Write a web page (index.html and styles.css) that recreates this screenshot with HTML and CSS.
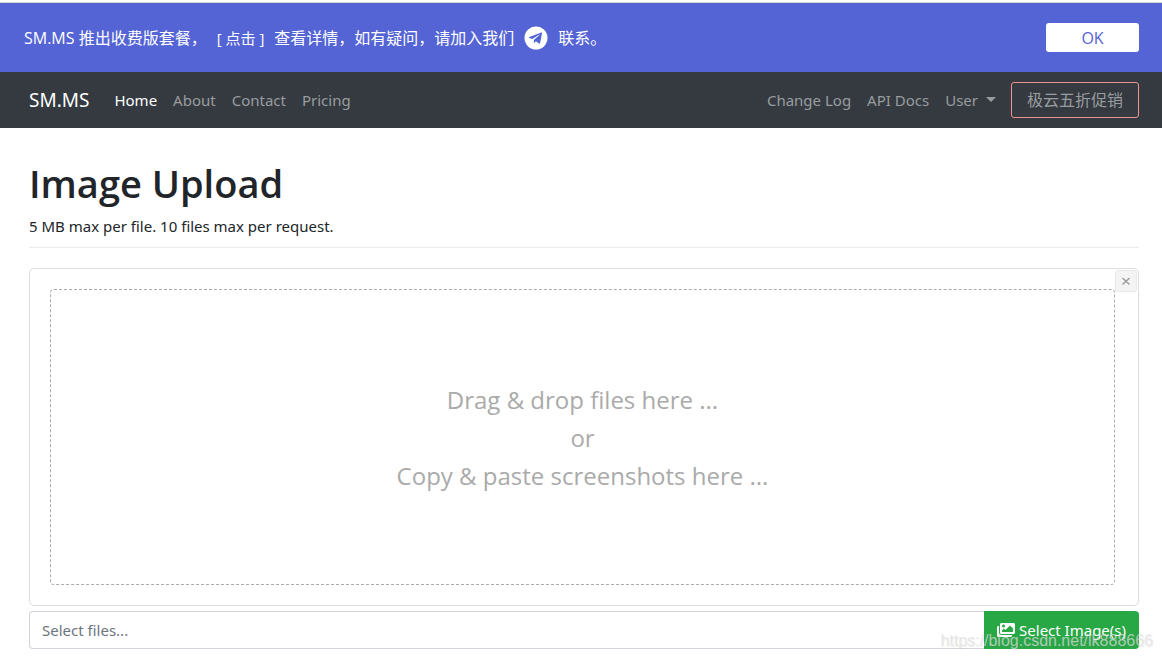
FILE: index.html
```html
<!DOCTYPE html>
<html lang="en">
<head>
<meta charset="utf-8">
<meta name="viewport" content="width=device-width, initial-scale=1">
<title>Image Upload - SM.MS</title>
<link rel="stylesheet" href="styles.css">
</head>
<body>
<aside class="notice" lang="zh-CN">
  <p class="notice-text">
    <span>SM.MS 推出收费版套餐，</span>
    <a class="notice-link" href="#pricing">[ 点击 ]</a>
    <span>查看详情，如有疑问，请加入我们</span>
    <a class="telegram" href="#telegram" aria-label="Telegram">
      <svg viewBox="0 0 24 24" width="24" height="24" aria-hidden="true">
        <circle cx="12" cy="12" r="11.5" fill="#fff"/>
        <path d="M18.100 6.800 16.100 17c-.15.7-.55.85-1.100.55l-3.100-2.300-1.500 1.450c-.17.17-.3.3-.63.3l.23-3.200 5.700-5.150c.25-.22-.05-.35-.38-.13l-7.050 4.450-3-.95c-.66-.2-.68-.66.14-.98l11.800-4.550c.55-.2 1.050.13.890.31Z" fill="#5464d5"/>
      </svg>
    </a>
    <span>联系。</span>
  </p>
  <button class="notice-ok" type="button">OK</button>
</aside>
<nav class="navbar">
  <a class="brand" href="#">SM.MS</a>
  <div class="nav-group">
    <a class="nav-link active" href="#">Home</a>
    <a class="nav-link" href="#about">About</a>
    <a class="nav-link" href="#contact">Contact</a>
    <a class="nav-link" href="#pricing">Pricing</a>
  </div>
  <div class="nav-group nav-end">
    <a class="nav-link" href="#log">Change Log</a>
    <a class="nav-link" href="#docs">API Docs</a>
    <button class="nav-link dropdown" type="button">User</button>
    <a class="promo" href="#promo" lang="zh-CN">极云五折促销</a>
  </div>
</nav>
<main class="page">
  <h1 class="title">Image Upload</h1>
  <p class="subtitle">5 MB max per file. 10 files max per request.</p>
  <hr class="rule">
  <section class="preview">
    <button class="close" type="button" aria-label="Close">
      <svg viewBox="0 0 10 10" width="10" height="10" aria-hidden="true"><path d="M1.500 2l7 6.500M8.500 2l-7 6.500" stroke="#999" stroke-width="1.300"/></svg>
    </button>
    <div class="dropzone">Drag &amp; drop files here ...<br>or<br>Copy &amp; paste screenshots here ...</div>
  </section>
  <div class="upload">
    <input class="caption" type="text" aria-label="Selected files" placeholder="Select files..." readonly>
    <button class="browse" type="button">
      <svg viewBox="0 0 576 512" width="18" height="16" aria-hidden="true"><path fill="#fff" d="M480 416v16c0 26.500-21.500 48-48 48H48c-26.500 0-48-21.500-48-48V176c0-26.500 21.500-48 48-48h16v208c0 44.100 35.900 80 80 80h336zm96-80V80c0-26.500-21.500-48-48-48H144c-26.500 0-48 21.500-48 48v256c0 26.500 21.500 48 48 48h384c26.500 0 48-21.500 48-48zM256 128c0 26.500-21.500 48-48 48s-48-21.500-48-48 21.500-48 48-48 48 21.500 48 48zm-96 144 55.500-55.500c4.700-4.700 12.300-4.700 17 0L272 256l135.500-135.500c4.700-4.700 12.300-4.700 17 0L512 208v112H160v-48z"/></svg>
      <span>Select Image(s)</span>
    </button>
    <span class="watermark">https://blog.csdn.net/lk888666</span>
  </div>
</main>
</body>
</html>
```
FILE: styles.css
```css
* {
  box-sizing: border-box;
}

body {
  margin: 0;
  padding-top: 2px;
  background: #fff;
  color: #212529;
  font-family: "Noto Sans", "Noto Sans CJK SC", sans-serif;
  font-size: 15px;
  line-height: 24px;
}

a {
  color: inherit;
  text-decoration: none;
}

button,
input {
  font: inherit;
}

.notice {
  display: flex;
  align-items: center;
  justify-content: space-between;
  min-height: 70px;
  padding: 0 23px 0 24px;
  border-top: 1px solid #d6d6d6;
  background: #5464d5;
  color: #fff;
}

.notice-text {
  display: flex;
  align-items: center;
  gap: 10px;
  margin: 0;
  font-family: "Open Sans", "Noto Sans CJK SC", sans-serif;
  font-size: 16px;
}

.notice-link {
  font-size: 15px;
}

.telegram {
  display: flex;
}

.notice-ok {
  width: 93px;
  height: 29px;
  padding: 0;
  border: 0;
  border-radius: 3px;
  background: #fff;
  color: #5464d5;
  font-family: "Open Sans", sans-serif;
  font-size: 16px;
}

.navbar {
  display: flex;
  align-items: center;
  min-height: 56px;
  padding: 0 23px 0 29px;
  background: #343a40;
}

.brand {
  margin-right: 17px;
  color: #fff;
  font-size: 19px;
}

.nav-group {
  display: flex;
  align-items: center;
}

.nav-end {
  margin-left: auto;
}

.nav-link {
  padding: 8px;
  border: 0;
  background: none;
  color: #999c9f;
}

.nav-link.active {
  color: #fff;
}

.dropdown::after {
  content: "";
  display: inline-block;
  margin-left: 8px;
  border: 5px solid transparent;
  border-top-color: currentColor;
  border-bottom: 0;
  vertical-align: 4px;
}

.promo {
  margin-left: 7px;
  padding: 5px 15px;
  border: 1px solid #f29393;
  border-radius: 3px;
  color: #999c9f;
  font-size: 16px;
}

.page {
  padding: 31px 23px 10px 29px;
}

.title {
  margin: 0 0 7px;
  font-family: "Open Sans", sans-serif;
  font-size: 38px;
  font-weight: 600;
  line-height: 48px;
}

.subtitle {
  margin: 0;
}

.rule {
  margin: 9px 0 20px;
  border: 0;
  border-top: 1px solid #ebebeb;
}

.preview {
  position: relative;
  padding: 20px 23px 20px 20px;
  border: 1px solid #ddd;
  border-radius: 5px;
}

.close {
  position: absolute;
  top: 1px;
  right: 1px;
  display: flex;
  align-items: center;
  justify-content: center;
  width: 22px;
  height: 22px;
  padding: 0;
  border: 1px solid #e8e8e8;
  border-radius: 3px;
  background: #f4f4f4;
}

.dropzone {
  padding: 91px 20px 89px;
  border: 1px dashed #aaa;
  border-radius: 4px;
  color: #aaa;
  font-family: "Open Sans", sans-serif;
  font-size: 24px;
  line-height: 38px;
  text-align: center;
}

.upload {
  position: relative;
  display: flex;
  margin-top: 5px;
}

.caption {
  flex: 1;
  min-width: 0;
  height: 38px;
  padding: 0 12px;
  border: 1px solid #ced4da;
  border-right: 0;
  border-radius: 4px 0 0 4px;
  color: #495057;
}

.caption::placeholder {
  color: #6c757d;
}

.browse {
  display: flex;
  align-items: center;
  gap: 4px;
  padding: 0 13px;
  border: 0;
  border-radius: 0 4px 4px 0;
  background: #28a745;
  color: #fff;
}

.watermark {
  position: absolute;
  right: -14px;
  bottom: -4px;
  color: rgba(225, 225, 225, 0.7);
  font-family: "Liberation Sans", sans-serif;
  font-size: 16px;
  text-shadow: 1px 1px 1px rgba(120, 120, 120, 0.15);
  pointer-events: none;
}
```
